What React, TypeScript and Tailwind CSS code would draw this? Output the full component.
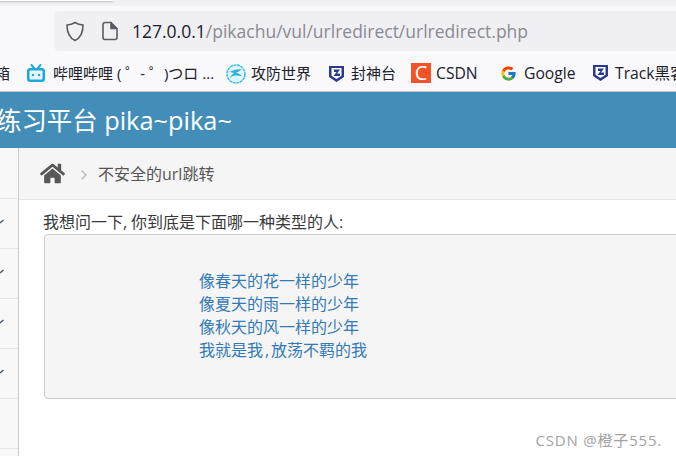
import { FaHome } from "react-icons/fa";
import { FcGoogle } from "react-icons/fc";
import { ChevronRight } from "lucide-react";

const uiFont = "font-['Open_Sans','Noto_Sans_CJK_SC',sans-serif]";

function TrackIcon() {
  return (
    <svg className="shrink-0" width="17" height="18" viewBox="0 0 17 18" fill="none">
      <path d="M1 1h15v11l-7.500 5L1 12z" fill="#2b3a8f" />
      <path d="M3.500 3v7.800l5 3.300 5-3.300V3z" fill="#fff" />
      <path d="M6 4.500h6L9 8.500h3V11H5.500L8.500 7H6z" fill="#2b3a8f" />
    </svg>
  );
}

function BilibiliIcon() {
  return (
    <svg className="shrink-0" width="20" height="19" viewBox="0 0 20 19" fill="none">
      <path d="M5.500 1l2.500 3M14.500 1L12 4" stroke="#20a8dc" strokeWidth="2" strokeLinecap="round" />
      <rect x="1" y="4" width="18" height="14" rx="3" fill="#20a8dc" />
      <rect x="3.500" y="6.500" width="13" height="9" rx="1" fill="#e6f6fc" />
      <circle cx="7" cy="11" r="1.200" fill="#20a8dc" />
      <circle cx="13" cy="11" r="1.200" fill="#20a8dc" />
    </svg>
  );
}

function GlobeIcon() {
  return (
    <svg className="shrink-0" width="20" height="20" viewBox="0 0 20 20" fill="none">
      <circle cx="10" cy="10" r="9" fill="#dff4fb" stroke="#35bde2" strokeWidth="1.500" strokeDasharray="3 0.600" />
      <path d="M4 8c4-3 7-2 12-3-2 2-5 3-6 4 2 0 4 1 6 3-4 0-8-2-12 2 1-3 3-4 4-5z" fill="#35b0d8" />
    </svg>
  );
}

function Bookmark({ icon, label, className }: { icon: React.ReactNode; label: string; className: string }) {
  return (
    <div className={`flex items-center shrink-0 ${className}`}>
      {icon}
      <span className="text-[#20202a] whitespace-nowrap">{label}</span>
    </div>
  );
}

function Tick() {
  return (
    <svg width="4" height="5" viewBox="0 0 4 5" fill="none">
      <path d="M0 4l3.500-3" stroke="#4a5a6a" strokeWidth="1.500" />
    </svg>
  );
}

export default function App() {
  const lines = ["像春天的花一样的少年", "像夏天的雨一样的少年", "像秋天的风一样的少年"];

  return (
    <div className={`relative w-[676px] h-[456px] overflow-hidden bg-white ${uiFont}`}>
      {/* browser chrome */}
      <div className="h-[6px] bg-[#f0f0f4]">
        <div className="w-[113px] h-px bg-white shadow-[0_1px_2px_rgba(0,0,0,0.3)]" />
      </div>
      <div className="h-[45px] bg-[#f9f9fb] pl-[54px] pt-[5px]">
        <div className="h-[40px] bg-[#f0f0f4] rounded-l-[5px] flex items-center pl-[11px] whitespace-nowrap overflow-hidden">
          <svg width="20" height="21" viewBox="0 0 20 21" fill="none" stroke="#5b5b66" strokeWidth="1.600">
            <path d="M10 1.500c2.500 1.600 5 2.300 8 2.500 0 7-1.500 12.500-8 15.500C3.500 16.500 2 11 2 4c3-.2 5.500-.9 8-2.500z" />
          </svg>
          <svg className="ml-[16px]" width="18" height="20" viewBox="0 0 18 20" fill="none" stroke="#5b5b66" strokeWidth="1.600">
            <path d="M2 3.500A2 2 0 0 1 4 1.500h6l6 6v9a2 2 0 0 1-2 2H4a2 2 0 0 1-2-2z" />
            <path d="M10 1.500v6h6" fill="#5b5b66" />
          </svg>
          <span className="ml-[13px] text-[17.500px] text-[#20202a]">
            127.0.0.1<span className="text-[#8a8a92]">/pikachu/vul/urlredirect/urlredirect.php</span>
          </span>
        </div>
      </div>
      <div className="h-[40px] bg-[#f9f9fb] flex items-center -ml-[5px] pt-[5px] overflow-hidden text-[15px]">
        <span className="shrink-0 w-[31px] text-[#20202a]">箱</span>
        <Bookmark className="w-[200px] gap-[7px]" icon={<BilibiliIcon />} label="哔哩哔哩 ( ゜- ゜)つロ ..." />
        <Bookmark className="w-[102px] gap-[5px]" icon={<GlobeIcon />} label="攻防世界" />
        <Bookmark className="w-[83px] gap-[6px]" icon={<TrackIcon />} label="封神台" />
        <Bookmark
          className="w-[89px] gap-[5px] text-[15.700px]"
          icon={<span className="w-[20px] h-[20px] bg-[#f4532a] text-white text-[20px] leading-[20px] text-center">C</span>}
          label="CSDN"
        />
        <Bookmark className="w-[92px] gap-[7px] text-[15.700px]" icon={<FcGoogle size={17} />} label="Google" />
        <Bookmark className="w-[100px] gap-[6px] text-[15.700px]" icon={<TrackIcon />} label="Track黑客" />
      </div>
      <div className="h-px bg-[#c4c4c8]" />

      {/* page header */}
      <div className="h-[56px] bg-[#438eb9] flex items-center -ml-[4px] text-[25.400px] text-white whitespace-nowrap">
        练习平台 pika~pika~
      </div>

      <div className="flex h-[308px]">
        {/* sidebar */}
        <div className="w-[19px] shrink-0 bg-[#f8f8f8] border-r border-[#cccccc]">
          {[0, 1, 2, 3, 4, 5].map((i) => (
            <div key={i} className={`flex items-center border-b border-[#e5e5e5] pb-[4px] ${i === 0 ? "h-[51px]" : "h-[50px]"}`}>
              {i > 0 && i < 5 && <Tick />}
            </div>
          ))}
        </div>

        <div className="flex-1 min-w-0">
          {/* breadcrumb */}
          <div className="h-[52px] bg-[#f5f5f5] border-b border-[#e5e5e5] flex items-center pl-[21px]">
            <FaHome size={25} className="text-[#585858]" />
            <ChevronRight size={16} strokeWidth={2} className="ml-[11px] text-[#b2b6bf] mt-[3px]" />
            <span className="ml-[6px] text-[16px] text-[#555555] mt-[1px]">不安全的url跳转</span>
          </div>

          {/* content */}
          <div className="pl-[25px] pt-[10px]">
            <p className="text-[16px] leading-[24px] text-[#393939] whitespace-nowrap -ml-px">
              我想问一下<span className="inline-block w-[8px]">,</span>你到底是下面哪一种类型的人:
            </p>
            <div className="-mr-[20px] h-[165px] bg-[#f5f5f5] border border-[#cccccc] rounded-[4px] pl-[154px] pt-[35px]">
              {lines.map((line) => (
                <a key={line} className="block text-[16px] leading-[23px] text-[#337ab7] whitespace-nowrap">
                  {line}
                </a>
              ))}
              <a className="block text-[16px] leading-[23px] text-[#337ab7] whitespace-nowrap">
                我就是我<span className="inline-block w-[8px] text-center">,</span>放荡不羁的我
              </a>
            </div>
          </div>
        </div>
      </div>

      {/* watermark */}
      <div className="absolute right-[14px] bottom-[6px] text-[15px] leading-[20px] text-[#a3a3a3] tracking-[0.800px] whitespace-nowrap">
        CSDN @橙子555.
      </div>
    </div>
  );
}
